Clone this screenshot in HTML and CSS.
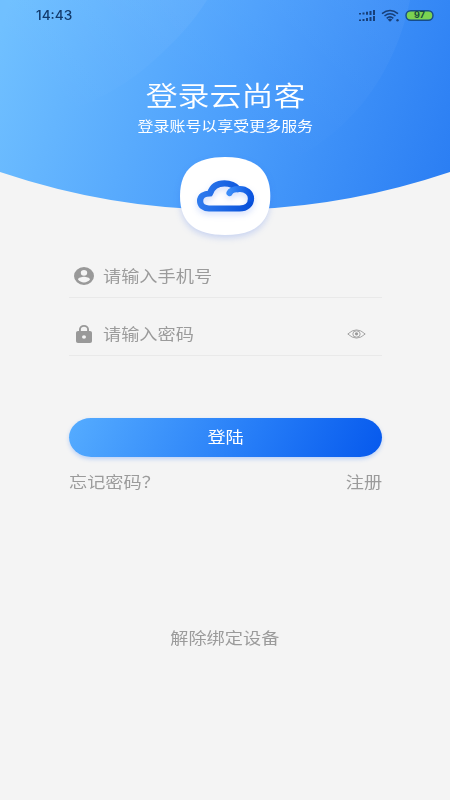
FILE: index.html
```html
<!DOCTYPE html>
<html lang="zh-CN">
<head>
<meta charset="utf-8">
<meta name="viewport" content="width=device-width">
<title>登录云尚客</title>
<link rel="stylesheet" href="styles.css">
</head>
<body>
<main class="screen">
  <header class="hero">
    <svg class="hero-bg" viewBox="0 0 450 212" aria-hidden="true">
      <defs>
        <linearGradient id="sky" gradientUnits="userSpaceOnUse" x1="0" y1="30" x2="450" y2="180">
          <stop offset="0" stop-color="#70c0ff"/><stop offset=".5" stop-color="#4da0fc"/><stop offset="1" stop-color="#2b7ef3"/>
        </linearGradient>
        <linearGradient id="glow" gradientUnits="userSpaceOnUse" x1="400" y1="20" x2="290" y2="165">
          <stop offset="0" stop-color="#fff" stop-opacity=".04"/><stop offset="1" stop-color="#fff" stop-opacity="0"/>
        </linearGradient>
        <linearGradient id="glow2" gradientUnits="userSpaceOnUse" x1="200" y1="0" x2="70" y2="115">
          <stop offset="0" stop-color="#fff" stop-opacity=".05"/><stop offset="1" stop-color="#fff" stop-opacity="0"/>
        </linearGradient>
      </defs>
      <path d="M0 0H450V172Q225 247.500 0 172Z" fill="url(#sky)"/>
      <path d="M0 0H410C404 30 390 70 362 104C340 131 310 152 280 168Q170 206 0 172Z" fill="url(#glow)"/>
      <path d="M0 0H207C193 22 180 36 165 50C140 75 110 96 70 110Q40 121 0 125Z" fill="url(#glow2)"/>
    </svg>
    <div class="status">
      <span class="clock">14:43</span>
      <svg class="signals" width="78" height="14" viewBox="0 0 78 14" aria-hidden="true">
        <g fill="#173f78">
          <path d="M1 4h2v1.500H1zM4.500 3.500h2V5.500h-2zM8 2.700h2v3H8zM11.500 2h2v4h-2zM15 1h2v5h-2z"/>
          <path d="M1 10.500h2V12H1zM4.500 10h2v2h-2zM8 9h2v3H8zM11.500 8h2v4h-2zM15 7h2v5h-2z"/>
          <path d="M32 9.600l2.400 1-2.400 2.200-2.400-2.200z"/>
          <circle cx="39.500" cy="11.200" r="1.200"/>
        </g>
        <path d="M24 4.600Q32 -1.700 40 4.600M26.500 7Q32 2.600 37.500 7M28.700 9.300Q32 6.600 35.300 9.300" fill="none" stroke="#173f78" stroke-width="1.600"/>
        <rect x="48" y="1.700" width="27" height="9.600" rx="4.800" fill="#7bd251" stroke="#174c87" stroke-width="1.400"/>
        <text x="61.500" y="9.300" text-anchor="middle" textLength="11" lengthAdjust="spacingAndGlyphs" class="battery">97</text>
      </svg>
    </div>
    <h1 class="title"><span class="wide">登录云尚客</span></h1>
    <p class="subtitle"><span class="wide">登录账号以享受更多服务</span></p>
    <svg class="logo" width="110" height="100" viewBox="0 0 110 100" aria-hidden="true">
      <defs>
        <linearGradient id="cloud" x1="0" y1="0" x2="1" y2="0"><stop offset="0" stop-color="#2e7aed"/><stop offset="1" stop-color="#064fd9"/></linearGradient>
        <linearGradient id="curl" x1="0" y1="0" x2="1" y2="0"><stop offset="0" stop-color="#3a8cf8"/><stop offset="1" stop-color="#0b55e0"/></linearGradient>
      </defs>
      <path class="tile" d="M55 10C83 10 100.300 21 100.300 49S83 88 55 88 10 77 10 49 27 10 55 10Z"/>
      <g class="cloud" fill="none" stroke-width="6.200" stroke-linecap="round" stroke-linejoin="round">
        <path stroke="url(#cloud)" d="M68 42C65 38.500 60.500 36.300 54.500 36.300C47 36.300 42 40 40 46.500C34 46.500 30.100 49.500 30.100 54C30.100 58.500 34 61.500 39 61.500H69.500C76.500 61.500 81 57.500 81 51.500"/>
        <path stroke="url(#curl)" d="M81 51.500C81 46 76 42 70 42C64.500 42 60.500 43.500 59.500 46"/>
      </g>
    </svg>
  </header>
  <form class="form">
    <label class="field">
      <svg class="icon" width="20" height="18" viewBox="2 2 20 20" preserveAspectRatio="none"><path d="M12 2a10 10 0 100 20 10 10 0 000-20zm0 3.300a3.200 3.200 0 110 6.400 3.200 3.200 0 010-6.400zm0 13.900c-2.500 0-4.700-1.300-6-3.200 0-2 4-3.100 6-3.100s6 1.100 6 3.100c-1.300 1.900-3.500 3.200-6 3.200z"/></svg>
      <span class="hint wide-left">请输入手机号</span>
    </label>
    <label class="field field-next">
      <svg class="icon" width="20" height="18" viewBox="2 1 20 21" preserveAspectRatio="none"><path d="M18 8h-1V6A5 5 0 007 6v2H6a2 2 0 00-2 2v10a2 2 0 002 2h12a2 2 0 002-2V10a2 2 0 00-2-2zM8.900 6a3.100 3.100 0 016.200 0v2H8.900zM12 17a2 2 0 110-4 2 2 0 010 4z"/></svg>
      <span class="hint wide-left">请输入密码</span>
      <svg class="eye" width="19" height="10" viewBox="0 0 19 10"><path d="M.8 5Q9.500-3.200 18.200 5Q9.500 13.200.8 5Z"/><ellipse cx="9.500" cy="5" rx="3.700" ry="3.200"/><circle class="pupil" cx="9.500" cy="4.800" r="1.600"/></svg>
    </label>
    <button class="submit" type="button"><span class="wide">登陆</span></button>
    <div class="links">
      <a class="wide-left">忘记密码？</a>
      <a class="wide-right">注册</a>
    </div>
  </form>
  <footer class="unbind"><span class="wide">解除绑定设备</span></footer>
</main>
</body>
</html>
```
FILE: styles.css
```css
* { box-sizing: border-box; }
body { margin: 0; background: #f4f4f4; font-family: "Noto Sans CJK SC", "Noto Sans", sans-serif; font-weight: 400; color: #9b9b9b; }
.screen { display: flex; flex-direction: column; height: 800px; overflow: hidden; }
.hero { position: relative; display: flex; flex-direction: column; align-items: center; height: 247px; flex: none; }
.hero-bg { position: absolute; inset: 0 0 auto; width: 450px; height: 212px; }
.status { position: relative; display: flex; align-items: center; justify-content: space-between; width: 100%; height: 32px; padding: 0 14px 0 35.5px; }
.clock { font: 500 12.4px/16px Inter, sans-serif; color: #123a6b; transform: scaleX(1.1); transform-origin: left; }
.battery { font: 700 8.5px Inter, sans-serif; fill: #174c3c; }
.wide, .wide-left, .wide-right { display: inline-block; white-space: nowrap; transform: scaleX(1.166); }
.wide-left { transform-origin: left; }
.wide-right { transform-origin: right; }
.title { position: relative; margin: 42px 0 0; font-size: 27.4px; line-height: 40px; font-weight: 350; color: #fff; }
.subtitle { position: relative; margin: 0; font-size: 13.7px; line-height: 22px; color: #fff; }
.logo { position: relative; margin-top: 11px; overflow: visible; }
.tile { fill: #fff; filter: drop-shadow(0 3px 3px rgba(50, 100, 230, .22)); }
.cloud { filter: drop-shadow(0 3px 3px rgba(30, 90, 240, .2)); }
.form { display: flex; flex-direction: column; margin: 0 68px 0 69px; }
.field { display: flex; align-items: center; height: 51px; padding: 7px 16px 0 5px; border-bottom: 1px solid #e9e9e9; }
.field-next { height: 58px; padding-top: 14px; }
.icon { fill: #999; margin-right: 9px; }
.hint { font-size: 15.6px; line-height: 24px; margin-top: -2px; }
.eye { margin-left: auto; fill: none; stroke: #a4a4a4; stroke-width: 1; }
.pupil { fill: #999; stroke: none; }
.submit { height: 39px; margin-top: 62px; padding: 0 0 3px; border: 0; border-radius: 22px / 19.5px; background: linear-gradient(115deg, #55acff, #247bf7 60%, #0659ed); box-shadow: 0 2px 4px rgba(40, 120, 255, .28); color: #fff; font: inherit; font-size: 15.6px; line-height: 36px; }
.links { display: flex; justify-content: space-between; margin-top: 12px; font-size: 15.6px; line-height: 24px; }
.unbind { margin-top: 132px; text-align: center; font-size: 15.6px; line-height: 24px; }
```
